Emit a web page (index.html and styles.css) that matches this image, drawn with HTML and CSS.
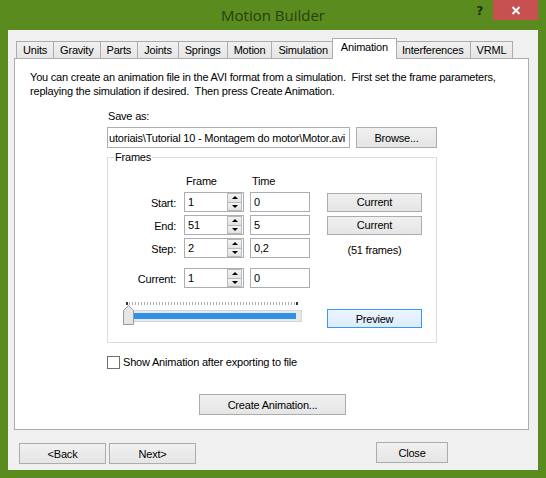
FILE: index.html
```html
<!DOCTYPE html>
<html>
<head>
<meta charset="utf-8">
<title>Motion Builder</title>
<link rel="stylesheet" href="styles.css">
</head>
<body>
<div class="window">
  <div class="titlebar">
    <div class="tb-left"></div>
    <div class="title">Motion Builder</div>
    <div class="tb-right">
      <span class="help">?</span>
      <span class="close"><svg width="10" height="9" viewBox="0 0 10 9"><path d="M1.5 1L8.5 8M8.5 1L1.5 8" stroke="#fff" stroke-width="2"/></svg></span>
    </div>
  </div>
  <div class="client">
    <div class="tabs">
      <div class="tab">Units</div>
      <div class="tab">Gravity</div>
      <div class="tab">Parts</div>
      <div class="tab">Joints</div>
      <div class="tab">Springs</div>
      <div class="tab">Motion</div>
      <div class="tab">Simulation</div>
      <div class="tab active">Animation</div>
      <div class="tab">Interferences</div>
      <div class="tab">VRML</div>
    </div>
    <div class="panel">
      <p class="intro">You can create an animation file in the AVI format from a simulation.&nbsp; First set the frame parameters,<br>replaying the simulation if desired.&nbsp; Then press Create Animation.</p>
      <div class="column">
        <div class="save-label">Save as:</div>
        <div class="save-row">
          <div class="textbox path"><span>utoriais\Tutorial 10 - Montagem do motor\Motor.avi</span></div>
          <button class="btn browse">Browse...</button>
        </div>
        <fieldset class="frames">
          <legend>Frames</legend>
          <div class="frow hdr">
            <div></div><div class="h">Frame</div><div class="h">Time</div><div></div>
          </div>
          <div class="frow r1">
            <div class="lbl">Start:</div>
            <div class="textbox spin"><span>1</span><span class="arrows"><span class="up"><i></i></span><span class="dn"><i></i></span></span></div>
            <div class="textbox time">0</div>
            <button class="btn cur">Current</button>
          </div>
          <div class="frow r2">
            <div class="lbl">End:</div>
            <div class="textbox spin"><span>51</span><span class="arrows"><span class="up"><i></i></span><span class="dn"><i></i></span></span></div>
            <div class="textbox time">5</div>
            <button class="btn cur">Current</button>
          </div>
          <div class="frow r2">
            <div class="lbl">Step:</div>
            <div class="textbox spin"><span>2</span><span class="arrows"><span class="up"><i></i></span><span class="dn"><i></i></span></span></div>
            <div class="textbox time">0,2</div>
            <div class="count">(51 frames)</div>
          </div>
          <div class="frow r4">
            <div class="lbl">Current:</div>
            <div class="textbox spin"><span>1</span><span class="arrows"><span class="up"><i></i></span><span class="dn"><i></i></span></span></div>
            <div class="textbox time">0</div>
            <div></div>
          </div>
          <div class="frow r5">
            <div class="slider">
              <div class="ticks"></div>
              <div class="track"><div class="range"></div></div>
              <svg class="thumb" width="12" height="20" viewBox="0 0 12 20"><polygon points="0.5,5.5 5.5,0.5 10.5,5.5 10.5,19.5 0.5,19.5" fill="#e6e6e6" stroke="#9a9a9a"/></svg>
            </div>
            <button class="btn preview">Preview</button>
          </div>
        </fieldset>
        <label class="check"><span class="box"></span>Show Animation after exporting to file</label>
      </div>
      <button class="btn create">Create Animation...</button>
    </div>
    <div class="footer">
      <button class="btn nav">&lt;Back</button>
      <button class="btn nav">Next&gt;</button>
      <button class="btn closebtn">Close</button>
    </div>
  </div>
</div>
</body>
</html>
```
FILE: styles.css
```css
* { box-sizing: border-box; }
html, body { margin: 0; padding: 0; }
body {
  width: 546px;
  height: 478px;
  overflow: hidden;
  background: #5a8b1f;
  font: 11px "Liberation Sans", Arial, sans-serif;
  letter-spacing: -0.2px;
  color: #000;
}
.window { display: flex; flex-direction: column; height: 478px; }
.titlebar {
  height: 30px;
  flex: none;
  display: grid;
  grid-template-columns: 1fr auto 1fr;
  align-items: start;
}
.title {
  font: 15px "Open Sans", "Noto Sans", sans-serif;
  letter-spacing: 0;
  color: #27400f;
  line-height: 30px;
}
.tb-right { display: flex; justify-content: flex-end; align-items: flex-start; padding-right: 8px; }
.help {
  font: bold 12px "DejaVu Sans", sans-serif;
  color: #1d2e0b;
  margin-top: 4px;
  margin-right: 10px;
}
.close {
  width: 45px;
  height: 20px;
  background: #c75050;
  display: flex;
  align-items: center;
  justify-content: center;
}
.client {
  flex: 1;
  margin: 0 8px 8px;
  background: #f0f0f0;
  padding: 8px 9px 0 6px;
  display: flex;
  flex-direction: column;
}
.tabs {
  display: flex;
  align-items: flex-end;
  height: 21px;
  padding-left: 2px;
  margin-bottom: -1px;
  position: relative;
  z-index: 1;
}
.tab {
  height: 17px;
  margin-bottom: 1px;
  margin-right: -1px;
  padding: 0 6px;
  border: 1px solid #acacac;
  border-bottom: none;
  background: linear-gradient(#f0f0f0, #e5e5e5);
  line-height: 16px;
  white-space: nowrap;
}
.tab.active {
  height: 21px;
  margin: 0 -1px 0 -2px;
  padding: 0 8px;
  background: #fff;
  line-height: 16px;
  position: relative;
  z-index: 2;
}
.tab.active + .tab { margin-left: -1px; }
.panel {
  height: 372px;
  flex: none;
  background: #fff;
  border: 1px solid #adadad;
  padding: 11px 15px 0;
  display: flex;
  flex-direction: column;
}
.intro { margin: 0; line-height: 14px; white-space: nowrap; }
.column { margin-left: 77px; width: 330px; display: flex; flex-direction: column; }
.save-label { margin-top: 11px; line-height: 14px; margin-left: 1px; }
.save-row { margin-top: 4px; display: flex; gap: 6px; }
.textbox {
  height: 20px;
  border: 1px solid #abadb3;
  background: #fff;
  padding: 0 3px;
  display: flex;
  align-items: center;
  white-space: nowrap;
}
.path { width: 243px; height: 21px; overflow: hidden; padding: 0 1px; }
.path span { flex: none; }
.btn {
  font: inherit;
  letter-spacing: inherit;
  color: #000;
  border: 1px solid #acacac;
  background: linear-gradient(#f0f0f0, #e5e5e5);
  height: 21px;
  padding: 0;
  margin: 0;
}
.browse { width: 81px; }
.frames {
  margin: 2px 0 0;
  padding: 0 0 14px;
  border: 1px solid #dcdcdc;
  min-width: 0;
}
.frames legend { padding: 0 1px; margin-left: 6px; line-height: 14px; }
.frow {
  display: grid;
  grid-template-columns: 76px 66px 77px 95px;
  align-items: center;
}
.frow.hdr { margin-top: 10px; height: 14px; }
.h { padding-left: 2px; }
.frow.r1 { margin-top: 4px; }
.frow.r2 { margin-top: 3px; }
.frow.r4 { margin-top: 10px; }
.frow.r5 { margin-top: 11px; align-items: end; }
.lbl { text-align: right; padding-right: 8px; padding-top: 2px; }
.spin { width: 60px; justify-content: space-between; padding-right: 1px; }
.arrows { width: 15px; height: 18px; display: flex; flex-direction: column; }
.arrows > span {
  flex: 1;
  border: 1px solid #b9b9b9;
  background: linear-gradient(#f4f4f4, #e2e2e2);
  display: flex;
  align-items: center;
  justify-content: center;
}
.arrows > span + span { margin-top: -1px; }
.up i { width: 0; height: 0; border-left: 3px solid transparent; border-right: 3px solid transparent; border-bottom: 3px solid #000; }
.dn i { width: 0; height: 0; border-left: 3px solid transparent; border-right: 3px solid transparent; border-top: 3px solid #000; }
.time { width: 60px; }
.cur, .preview { width: 95px; height: 19px; }
.count { text-align: center; padding-top: 3px; }
.slider {
  grid-column: 1 / 4;
  margin-left: 15px;
  width: 180px;
  height: 29px;
  position: relative;
  align-self: start;
}
.ticks {
  margin: 3px 0 0 3px;
  width: 172px;
  height: 3px;
  background:
    linear-gradient(90deg, #333 0 2px, transparent 2px calc(100% - 2px), #333 calc(100% - 2px)),
    repeating-linear-gradient(90deg, #b0b0b0 0 1px, transparent 1px 3px);
}
.track {
  margin: 5px 0 0 6px;
  width: 173px;
  height: 12px;
  border: 1px solid #d6d6d6;
  background: #e7eaea;
  padding: 2px 0 0 3px;
}
.range { width: 163px; height: 6px; background: #3391e5; }
.thumb { position: absolute; left: 0; top: 6px; }
.preview {
  border-color: #3399ff;
  background: linear-gradient(#ecf4fc, #dcecfc);
}
.check { margin-top: 12px; display: flex; align-items: center; gap: 3px; line-height: 14px; }
.box { width: 13px; height: 13px; border: 1px solid #707070; background: #fff; }
.create { align-self: center; width: 147px; height: 21px; margin-top: 25px; margin-left: 2px; }
.footer { display: flex; align-items: flex-start; margin-top: 13px; padding-left: 5px; }
.nav { width: 87px; }
.nav + .nav { margin-left: 3px; }
.closebtn { width: 72px; margin-left: 180px; margin-top: -1px; }
```
